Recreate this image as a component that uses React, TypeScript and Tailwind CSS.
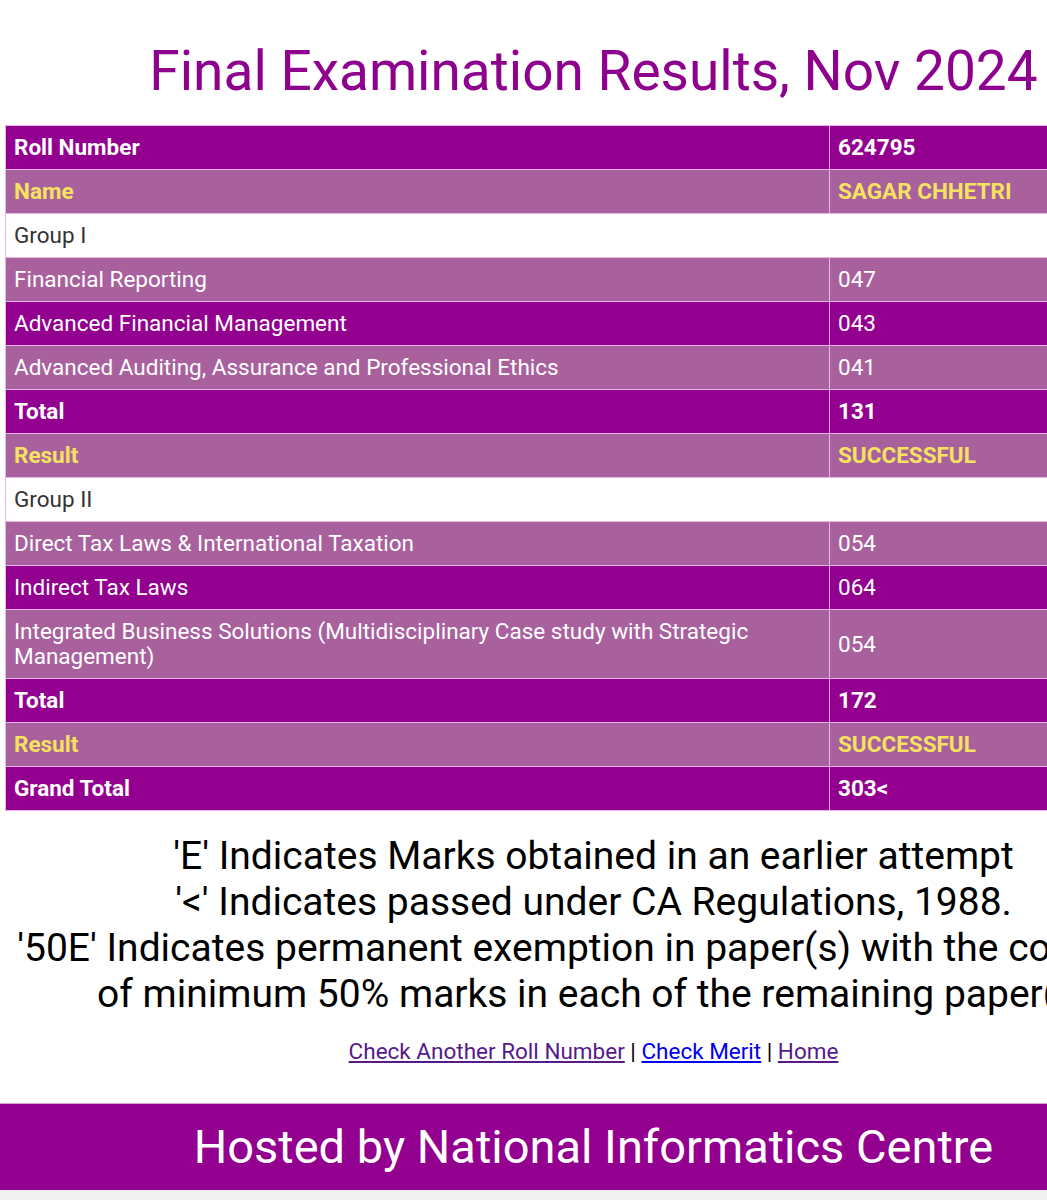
import React from "react"

type Row = {
  label: string
  value: string
  kind: "dark" | "light" | "group"
  bold?: boolean
  yellow?: boolean
}

const rows: Row[] = [
  { label: "Roll Number", value: "624795", kind: "dark", bold: true },
  { label: "Name", value: "SAGAR CHHETRI", kind: "light", bold: true, yellow: true },
  { label: "Group I", value: "", kind: "group" },
  { label: "Financial Reporting", value: "047", kind: "light" },
  { label: "Advanced Financial Management", value: "043", kind: "dark" },
  { label: "Advanced Auditing, Assurance and Professional Ethics", value: "041", kind: "light" },
  { label: "Total", value: "131", kind: "dark", bold: true },
  { label: "Result", value: "SUCCESSFUL", kind: "light", bold: true, yellow: true },
  { label: "Group II", value: "", kind: "group" },
  { label: "Direct Tax Laws & International Taxation", value: "054", kind: "light" },
  { label: "Indirect Tax Laws", value: "064", kind: "dark" },
  {
    label: "Integrated Business Solutions (Multidisciplinary Case study with Strategic Management)",
    value: "054",
    kind: "light",
  },
  { label: "Total", value: "172", kind: "dark", bold: true },
  { label: "Result", value: "SUCCESSFUL", kind: "light", bold: true, yellow: true },
  { label: "Grand Total", value: "303<", kind: "dark", bold: true },
]

function rowClass(r: Row) {
  if (r.kind === "group") return "bg-white text-[#333333] font-normal"
  const bg = r.kind === "dark" ? "bg-[#930090]" : "bg-[#a9619e]"
  const color = r.yellow ? "text-[#f4e35e]" : "text-white"
  return `${bg} ${color} ${r.bold ? "font-bold" : "font-normal"}`
}

export default function App() {
  return (
    <div className="w-[1047px] overflow-hidden bg-white" style={{ fontFamily: "Roboto, 'Noto Sans', sans-serif" }}>
      {/* page is wider than the viewport; the right side gets cut off like in the original */}
      <div className="w-[1187px]">
        <h1 className="pt-[38px] pb-[21px] text-center text-[55px] leading-[66px] font-normal text-[#8e008e]">
          Final Examination Results, Nov 2024
        </h1>

        <div className="px-[5px]">
          <table className="w-full border-collapse text-[22.5px] leading-[25px]">
            <tbody>
              {rows.map((r, i) =>
                r.kind === "group" ? (
                  <tr key={i} className={rowClass(r)}>
                    <td colSpan={2} className="border border-[#e7b6e6] px-[8px] py-[9px]">
                      {r.label}
                    </td>
                  </tr>
                ) : (
                  <tr key={i} className={rowClass(r)}>
                    <td className="w-[824px] border border-[#e7b6e6] px-[8px] py-[9px] align-middle">{r.label}</td>
                    <td className="border border-[#e7b6e6] px-[8px] py-[9px] align-middle">{r.value}</td>
                  </tr>
                )
              )}
            </tbody>
          </table>
        </div>

        <div className="mt-[22px] text-center text-[39px] leading-[46px] text-black">
          <p>'E' Indicates Marks obtained in an earlier attempt</p>
          <p>'&lt;' Indicates passed under CA Regulations, 1988.</p>
          <p>'50E' Indicates permanent exemption in paper(s) with the condition</p>
          <p>of minimum 50% marks in each of the remaining paper(s)</p>
        </div>

        <div className="mt-[20px] text-center text-[22.5px] leading-[28px] text-black">
          <a href="#" className="underline text-[#551a8b]">Check Another Roll Number</a>
          {" | "}
          <a href="#" className="underline text-[#0000ee]">Check Merit</a>
          {" | "}
          <a href="#" className="underline text-[#551a8b]">Home</a>
        </div>

        <div className="mt-[38px] h-[87px] bg-[#930090] flex items-center justify-center border-t border-[#d9a0d8]">
          <span className="text-[47px] text-white">Hosted by National Informatics Centre</span>
        </div>
        <div className="h-[20px] bg-[#f0f0f0]" />
      </div>
    </div>
  )
}
